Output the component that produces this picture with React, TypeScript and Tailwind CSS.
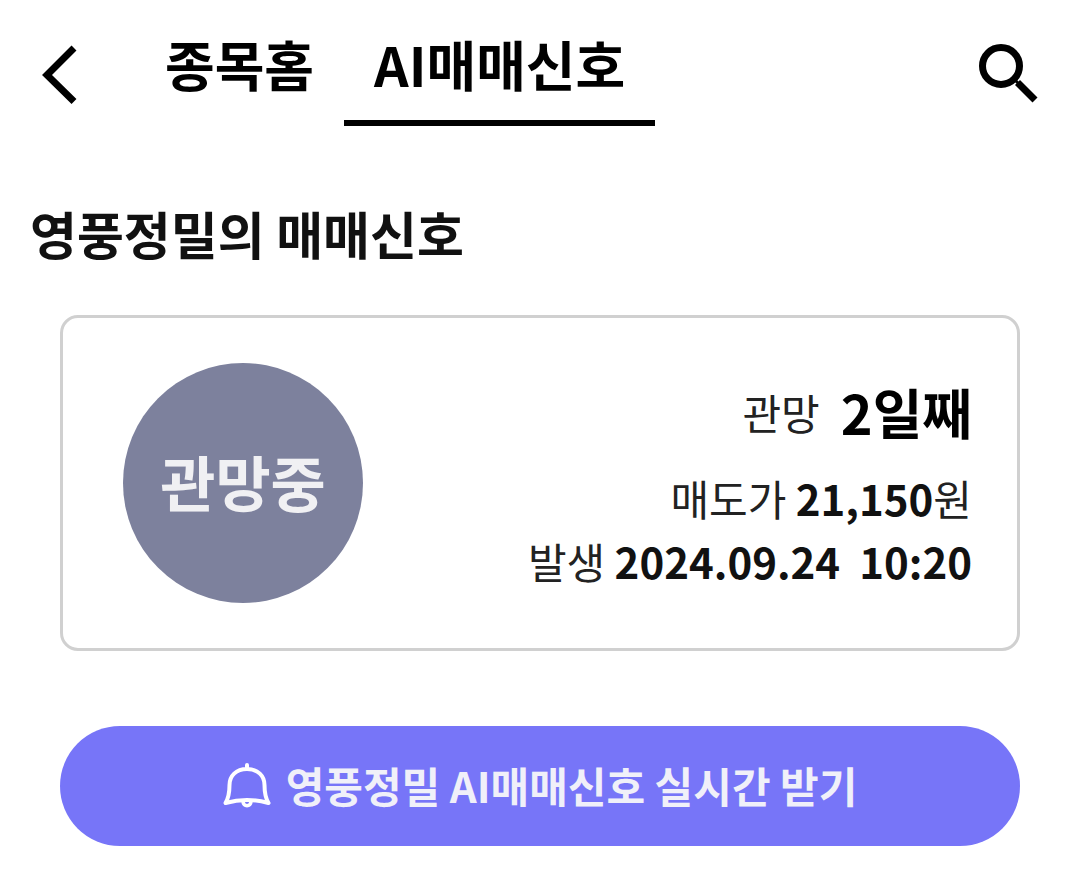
export default function App() {
  return (
    <div className="min-h-screen bg-white pb-6 font-['Noto_Sans_CJK_KR',sans-serif] text-black">
      <header className="flex items-start justify-between px-10">
        <div className="flex items-start">
          <button type="button" aria-label="뒤로" className="mt-11">
            <svg width="40" height="62" viewBox="0 0 40 62" fill="none" stroke="currentColor" strokeWidth="7">
              <path d="M34 4 7 31 34 57.5" />
            </svg>
          </button>
          <nav className="ml-[55px] flex text-[54px] font-bold leading-[112px]">
            <a href="#home" className="border-b-6 border-transparent px-[30px] pt-2">종목홈</a>
            <a href="#signal" aria-current="page" className="border-b-6 border-black px-[30px] pt-2">AI매매신호</a>
          </nav>
        </div>
        <button type="button" aria-label="검색" className="mt-11">
          <svg width="62" height="60" viewBox="0 0 62 60" fill="none" stroke="currentColor" strokeWidth="7">
            <circle cx="23" cy="22" r="18.5" />
            <path d="m36 35 5 5" strokeWidth="3" />
            <path d="M39.500 38.500 57 56" />
          </svg>
        </button>
      </header>
      <main>
        <h1 className="mt-[72px] px-[30px] text-[51px] font-bold leading-[70px] text-[#111]">영풍정밀의 매매신호</h1>
        <section className="mx-[60px] mt-[47px] flex items-center justify-between rounded-[18px] border-3 border-[#d0d0d0] py-[45px] pl-[60px] pr-[45px]">
          <div className="flex size-[240px] items-center justify-center rounded-full bg-[#7d819d] pb-1 text-[60px] font-bold text-[#f0f0f3]">관망중</div>
          <div className="text-right text-[42px] leading-[63px] text-[#222]">
            <p className="mb-4 flex items-center justify-end gap-[21px] leading-[76px]">
              관망 <strong className="text-[54px] text-black">2일째</strong>
            </p>
            <p>매도가 <strong className="text-[#111]">21,150</strong>원</p>
            <p className="whitespace-pre">발생 <strong className="text-[#111]">2024.09.24  10:20</strong></p>
          </div>
        </section>
        <div className="mt-[75px] px-[60px]">
          <button type="button" className="flex h-[120px] w-full items-center justify-center gap-[15px] rounded-full bg-[#7775f8] pb-1 text-[42px] font-bold text-[#f0f0f9]">
            <svg width="48" height="48" viewBox="0 0 48 48" fill="none" stroke="#fff" strokeWidth="4" strokeLinecap="round" strokeLinejoin="round">
              <path d="M24 5v4M6.500 25C6.500 16 13 9 24 9s17.500 7 17.500 16c0 8 1 13 4 18Q24 37 2.500 43C5.500 38 6.500 33 6.500 25Z" />
              <path d="M20 41.500c0 5.500 8 5.500 8 0" strokeWidth="3.500" />
            </svg>
            영풍정밀 AI매매신호 실시간 받기
          </button>
        </div>
      </main>
    </div>
  );
}
